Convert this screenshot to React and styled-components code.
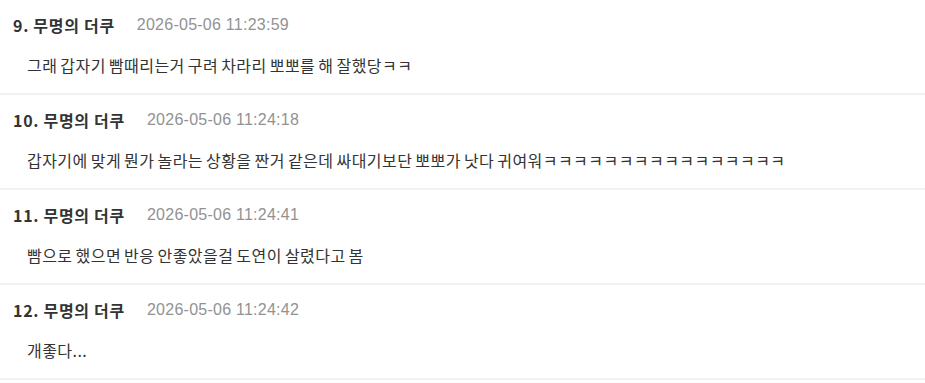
import React from "react";
import styled, { createGlobalStyle } from "styled-components";

const Global = createGlobalStyle`
  html, body { margin: 0; padding: 0; background: #fff; }
  body { font-family: "Noto Sans CJK KR", "Noto Sans", sans-serif; }
`;

const List = styled.ul`
  list-style: none;
  margin: 0;
  padding: 0;
`;

const Row = styled.li`
  padding: 13px 13px 16px 13px;
  border-bottom: 2px solid #f1f1f1;
`;

const Header = styled.div`
  display: flex;
  align-items: center;
  gap: 22px;
  height: 24px;
`;

const Name = styled.span`
  font-size: 16px;
  font-weight: 700;
  color: #333;
  letter-spacing: 0.7px;
`;

const DateText = styled.span`
  font-family: "Liberation Sans", "Noto Sans CJK KR", sans-serif;
  font-size: 16px;
  color: #929292;
  letter-spacing: 0.25px;
`;

const Body = styled.p`
  margin: 16px 0 0 14px;
  font-size: 16px;
  line-height: 24px;
  color: #333;
  letter-spacing: 0.45px;
  word-spacing: -1px;
`;

const comments = [
  { n: 9, date: "2026-05-06 11:23:59", text: "그래 갑자기 빰때리는거 구려 차라리 뽀뽀를 해 잘했당ㅋㅋ" },
  { n: 10, date: "2026-05-06 11:24:18", text: "갑자기에 맞게 뭔가 놀라는 상황을 짠거 같은데 싸대기보단 뽀뽀가 낫다 귀여워ㅋㅋㅋㅋㅋㅋㅋㅋㅋㅋㅋㅋㅋㅋㅋㅋ" },
  { n: 11, date: "2026-05-06 11:24:41", text: "빰으로 했으면 반응 안좋았을걸 도연이 살렸다고 봄" },
  { n: 12, date: "2026-05-06 11:24:42", text: "개좋다..." },
];

export default function App() {
  return (
    <>
      <Global />
      <List>
        {comments.map((c) => (
          <Row key={c.n}>
            <Header>
              <Name>{c.n}. 무명의 더쿠</Name>
              <DateText>{c.date}</DateText>
            </Header>
            <Body>{c.text}</Body>
          </Row>
        ))}
      </List>
    </>
  );
}
